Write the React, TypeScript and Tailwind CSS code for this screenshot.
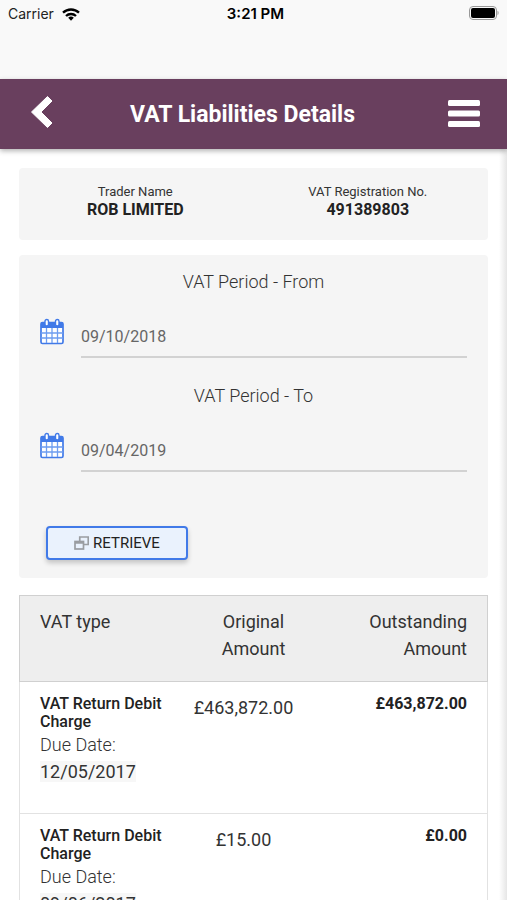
import { useState } from "react"

interface Liability {
  type: string,
  dueDate: string,
  original: string,
  outstanding: string
}

const liabilities: Liability[] = [
  { type: "VAT Return Debit Charge", dueDate: "12/05/2017", original: "£463,872.00", outstanding: "£463,872.00" },
  { type: "VAT Return Debit Charge", dueDate: "09/06/2017", original: "£15.00", outstanding: "£0.00" },
]

export default function App() {
  return (
    <div className="relative flex h-screen flex-col overflow-hidden bg-white font-['Roboto',sans-serif] text-[#333]">
      <StatusBar />
      <Header title="VAT Liabilities Details" />
      <main className="min-h-0 flex-1 overflow-y-auto px-[19px] pt-[19px] [scrollbar-width:none]">
        <TraderCard name="ROB LIMITED" vrn="491389803" />
        <PeriodForm />
        <LiabilityTable rows={liabilities} />
      </main>
      <div className="pointer-events-none absolute top-[79px] right-0 bottom-0 w-2 bg-linear-to-r from-transparent to-black/10"></div>
    </div>
  )
}

function StatusBar() {
  return (
    <div className="grid h-[79px] shrink-0 grid-cols-3 items-start bg-[#f9f9f9] px-2 pt-1 font-['Inter',sans-serif] text-sm text-[#222]">
      <div className="flex h-5 items-center gap-2">
        Carrier
        <svg width="18" height="13" viewBox="0 0 18 13" fill="none" stroke="#000" strokeWidth="2.3">
          <path d="M1 4.7a11.6 11.6 0 0 1 16 0" />
          <path d="M4 8a7.2 7.2 0 0 1 10 0" />
          <path d="M9 12.7 6.2 9.8a4 4 0 0 1 5.6 0Z" fill="#000" stroke="none" />
        </svg>
      </div>
      <div className="h-5 pl-1 text-center text-[15px] leading-5 font-semibold text-black">3:21 PM</div>
      <div className="flex h-[18px] items-center justify-end">
        <svg width="30" height="14" viewBox="0 0 30 14">
          <rect x="0.5" y="0.5" width="27" height="13" rx="3.5" fill="none" stroke="#999" />
          <rect x="2" y="2" width="24" height="10" rx="2" fill="#000" />
          <path d="M28.5 4.8c1.5.6 1.5 3.8 0 4.4Z" fill="#999" />
        </svg>
      </div>
    </div>
  )
}

function Header({ title }: { title: string }) {
  return (
    <header className="z-10 flex h-[70px] shrink-0 items-center bg-[#693f5e] pr-[26px] pl-[30px] text-white shadow-[0_2px_5px_rgba(0,0,0,0.3)]">
      <button aria-label="Back" className="pb-1">
        <svg width="24" height="34" viewBox="0 0 24 34" fill="currentColor" stroke="currentColor" strokeWidth="1" strokeLinejoin="round">
          <path d="M17.500 1.500 22 6 11 17l11 11-4.500 4.500L1.500 17Z" />
        </svg>
      </button>
      <h1 className="flex-1 pt-0.5 pr-4 text-center text-[23px] font-bold">{title}</h1>
      <button aria-label="Menu">
        <svg width="34" height="28" viewBox="0 0 34 28" fill="currentColor">
          <rect x="1" y="0" width="32" height="6" rx="1.500" />
          <rect x="1" y="10.500" width="32" height="6" rx="1.500" />
          <rect x="1" y="21" width="32" height="6" rx="1.500" />
        </svg>
      </button>
    </header>
  )
}

function TraderCard({ name, vrn }: { name: string, vrn: string }) {
  return (
    <section className="grid h-[72px] grid-cols-2 rounded bg-[#f5f5f5] pt-[15px] pr-1 text-center">
      <div>
        <div className="text-[13px] leading-[18px]">Trader Name</div>
        <div className="text-base leading-[18px] font-bold text-[#222]">{name}</div>
      </div>
      <div>
        <div className="text-[13px] leading-[18px]">VAT Registration No.</div>
        <div className="text-base leading-[18px] font-bold text-[#222]">{vrn}</div>
      </div>
    </section>
  )
}

function PeriodForm() {
  const [from, setFrom] = useState("09/10/2018")
  const [to, setTo] = useState("09/04/2019")

  return (
    <form className="mt-[15px] rounded bg-[#f5f5f5] px-[21px] pt-[13px] pb-[18px]" onSubmit={(e) => e.preventDefault()}>
      <DateField id="from" label="VAT Period - From" value={from} onChange={setFrom} />
      <DateField id="to" label="VAT Period - To" value={to} onChange={setTo} />
      <button className="mt-[30px] ml-1.5 flex h-[34px] w-[142px] items-center justify-center gap-1 rounded border-2 border-[#417ae8] bg-[#eaf2fd] text-[15px] text-[#222] shadow-[0_3px_5px_rgba(0,0,0,0.2)]">
        <svg width="15" height="14" viewBox="0 0 15 14" fill="none" stroke="#9a9da1" strokeWidth="1.700">
          <path d="M5.750 5V1h8.500v7.500H9.500" />
          <rect x="1" y="5.500" width="8.500" height="7.500" />
          <path d="M1 6.500h8.500" strokeWidth="2.500" />
        </svg>
        RETRIEVE
      </button>
    </form>
  )
}

interface DateFieldProps {
  id: string,
  label: string,
  value: string,
  onChange: (value: string) => void
}

function DateField({ id, label, value, onChange }: DateFieldProps) {
  return (
    <div className="h-[114px]">
      <label htmlFor={id} className="block text-center text-lg leading-[27px] font-light">{label}</label>
      <div className="mt-[22px] flex gap-[17px]">
        <CalendarIcon />
        <input
          id={id}
          value={value}
          onChange={(e) => onChange(e.target.value)}
          className="h-[41px] min-w-0 flex-1 border-b-2 border-[#d2d2d2] bg-transparent text-base text-[#666] outline-none"
        />
      </div>
    </div>
  )
}

function CalendarIcon() {
  return (
    <svg width="24" height="27" viewBox="0 0 24 27" className="mt-px shrink-0">
      <rect x="1" y="4.500" width="22" height="21" rx="1.500" fill="#fff" stroke="#417ae8" strokeWidth="1.700" />
      <path d="M1 4.500h22v5.500H1Z" fill="#417ae8" />
      <path d="M6.500 10v15M12 10v15M17.500 10v15M1 15h22M1 20h22" stroke="#6d9df0" strokeWidth="1.300" />
      <rect x="5" y="1.500" width="3.500" height="6.500" rx="1.750" fill="#fff" stroke="#417ae8" strokeWidth="1.400" />
      <rect x="15.500" y="1.500" width="3.500" height="6.500" rx="1.750" fill="#fff" stroke="#417ae8" strokeWidth="1.400" />
    </svg>
  )
}

function LiabilityTable({ rows }: { rows: Liability[] }) {
  return (
    <table className="mt-[17px] w-full table-fixed border-separate border-spacing-0 text-lg leading-[27px]">
      <thead>
        <tr className="h-[87px] bg-[#eee] align-top">
          <th className="border border-r-0 border-[#d0d0d0] pt-3 pl-5 text-left font-normal">VAT type</th>
          <th className="border-y border-[#d0d0d0] px-7 pt-3 text-center font-normal">Original Amount</th>
          <th className="border border-l-0 border-[#d0d0d0] pt-3 pr-5 pl-6 text-right font-normal">Outstanding Amount</th>
        </tr>
      </thead>
      <tbody>
        {rows.map((row) => (
          <tr key={row.dueDate} className="h-[132px] align-top">
            <td className="border-b border-l border-[#e2e2e2] pt-[13px] pl-5">
              <div className="text-base leading-[18px] font-medium text-[#222]">{row.type}</div>
              <div className="font-light">Due Date:</div>
              <span className="bg-[#f7f7f7]">{row.dueDate}</span>
            </td>
            <td className="border-b border-[#e2e2e2] pt-3 pr-5 text-center">{row.original}</td>
            <td className="border-r border-b border-[#e2e2e2] pt-[13px] pr-5 text-right text-base leading-[18px] font-bold text-[#222]">{row.outstanding}</td>
          </tr>
        ))}
      </tbody>
    </table>
  )
}
